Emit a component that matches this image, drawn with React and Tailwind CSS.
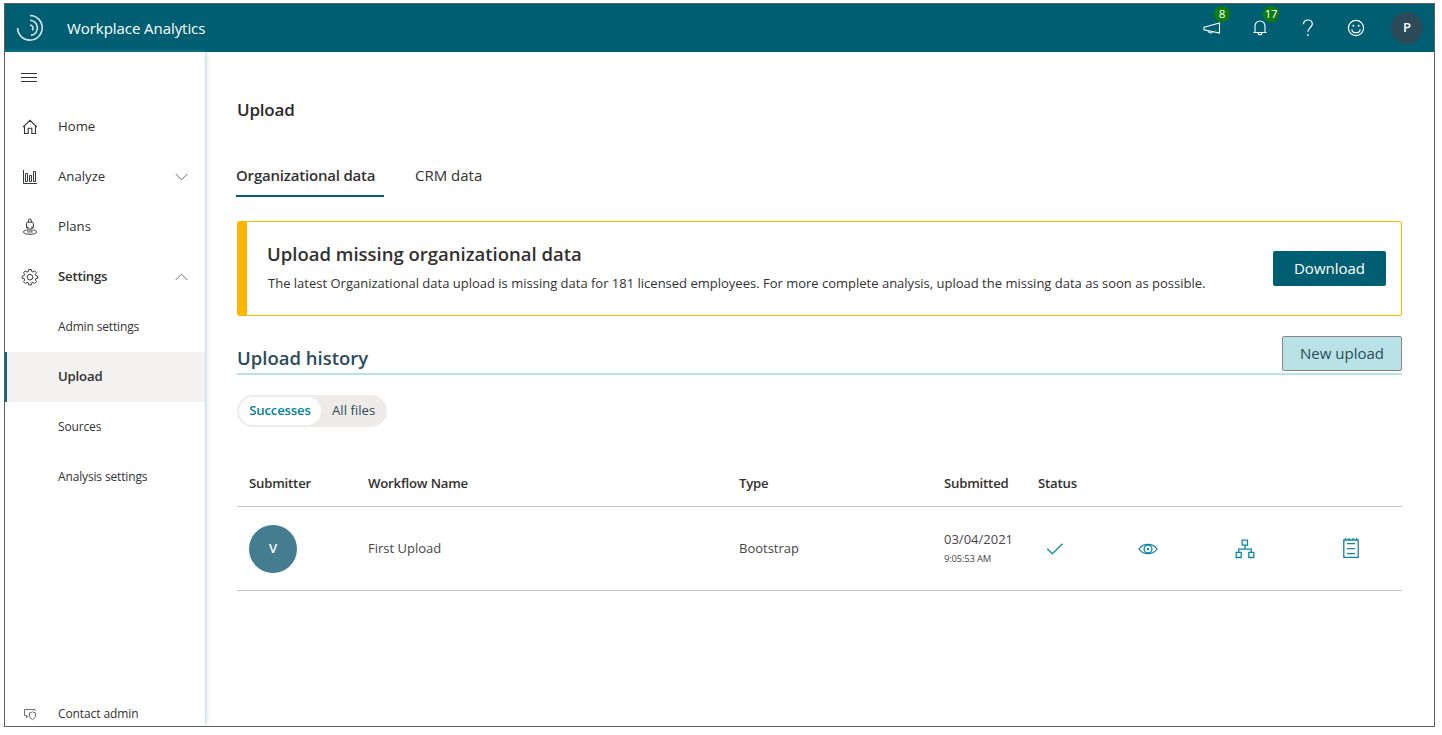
const NAV_TEXT = 'text-[#323130] whitespace-nowrap';

function Logo() {
  return (
    <svg className="h-7 w-7" viewBox="0 0 28 28" fill="none" stroke="#d3e6ea" strokeWidth="1.6">
      <path d="M14 1.5A12.3 12.3 0 1 1 1.6 14" />
      <path d="M14 6.3a7.6 7.6 0 0 1 1 15.1" />
      <path d="M14 11a3.2 3.2 0 0 1 2.2 5.4" />
    </svg>
  );
}

function Megaphone() {
  return (
    <svg className="h-[18px] w-[18px]" viewBox="0 0 18 18" fill="none" stroke="#fff" strokeWidth="1.1">
      <path d="M1 8.2 16.5 4v10L1 10.8z" />
      <path d="M5 11.8c.3 2.6 4 3 4.6.9" />
    </svg>
  );
}

function Bell() {
  return (
    <svg className="h-[18px] w-[18px]" viewBox="0 0 18 18" fill="none" stroke="#fff" strokeWidth="1.1">
      <path d="M2.5 13.5h13M4 13.5V7a5 5 0 0 1 10 0v6.5M7 13.8a2 2 0 0 0 4 0" />
    </svg>
  );
}

function Question() {
  return (
    <svg className="h-[18px] w-[12px]" viewBox="0 0 12 18" fill="none" stroke="#fff" strokeWidth="1.2">
      <path d="M1.5 5.2C1.5 2.6 3.300 1 5.800 1s4.500 1.500 4.500 4c0 3.600-4.500 3.800-4.500 7.700" />
      <path d="M5.800 15.300v1.600" strokeWidth="1.500" />
    </svg>
  );
}

function Smile() {
  return (
    <svg className="h-[18px] w-[18px]" viewBox="0 0 18 18" fill="none" stroke="#fff" strokeWidth="1.2">
      <circle cx="9" cy="9" r="7.600" />
      <path d="M4.700 10.300a4.400 4.400 0 0 0 8.600 0" />
      <circle cx="6.300" cy="6.800" r="1" fill="#fff" stroke="none" />
      <circle cx="11.700" cy="6.800" r="1" fill="#fff" stroke="none" />
    </svg>
  );
}

function HomeIcon() {
  return (
    <svg className="h-4 w-4" viewBox="0 0 16 16" fill="none" stroke="#3b3038" strokeWidth="1.1">
      <path d="M1 8.200 8 1.300l7 6.900M2.500 7v7.500h3.700V9.300h3.600v5.200h3.700V7" />
    </svg>
  );
}

function ChartIcon() {
  return (
    <svg className="h-4 w-4" viewBox="0 0 16 16" fill="none" stroke="#2f3b33" strokeWidth="1">
      <path d="M1.500 1v13.500H15" />
      <path d="M3.500 4.500h2v8h-2zM7.500 6.500h2v6h-2zM11.500 2.500h2v10h-2z" />
    </svg>
  );
}

function PlansIcon() {
  return (
    <svg className="h-[18px] w-4" viewBox="0 0 16 18" fill="none" stroke="#33302f" strokeWidth="1">
      <path d="M6.500 4V2.200a1 1 0 0 1 1-1h.8a1 1 0 0 1 1 1V4" />
      <path d="M4.500 5.500c0-1 .5-1.300 1.300-1.300H10c.8 0 1.400.3 1.400 1.300v4.200H9.900M4.500 5.500v4.200H6M6 8.500v6.200M8 10v4.700M9.900 8.500v6.200" />
      <path d="M4.700 12C2.700 12.300 1.500 13 1.500 14c0 1.400 2.900 2.300 6.500 2.300s6.500-.9 6.500-2.300c0-1-1.200-1.700-3.200-2" />
    </svg>
  );
}

function GearIcon() {
  return (
    <svg className="h-[18px] w-[18px]" viewBox="0 0 18 18" fill="none" stroke="#3d3b3a" strokeWidth="1">
      <path d="M7.700 1.500h2.600l.4 2 1.300.5 1.700-1.100 1.800 1.800L14.300 6.400l.5 1.300 2 .4v2.200l-2 .4-.5 1.300 1.200 1.700-1.800 1.800-1.700-1.100-1.300.5-.4 2H7.700l-.4-2-1.300-.5-1.700 1.100-1.800-1.800 1.200-1.700-.5-1.300-2-.4V8.100l2-.4.5-1.300-1.200-1.700 1.800-1.800L6 4l1.300-.5z" />
      <circle cx="9" cy="9.200" r="2.800" />
    </svg>
  );
}

function ContactIcon() {
  return (
    <svg className="h-[13px] w-[14px]" viewBox="0 0 14 13" fill="none" stroke="#6e6a70" strokeWidth="1">
      <path d="M12 3V1.500H1.500v6h2v2l2-1.700" />
      <path d="M6.500 4.800c1.200 0 2-.3 3-1 1 .7 1.800 1 3 1V7c0 2.300-1.300 3.700-3 4.700-1.700-1-3-2.400-3-4.700z" />
    </svg>
  );
}

function Chevron({ up, color }) {
  return (
    <svg className="h-2 w-[13px]" viewBox="0 0 13 8" fill="none" stroke={color} strokeWidth="1">
      <path d={up ? 'M.7 7 6.500 1.200 12.300 7' : 'M.7 1 6.500 6.800 12.300 1'} />
    </svg>
  );
}

function CheckIcon() {
  return (
    <svg className="h-3 w-[18px]" viewBox="0 0 18 12" fill="none" stroke="#1790ac" strokeWidth="1.400">
      <path d="M1.300 5.800 6.300 10.700 16.500.7" />
    </svg>
  );
}

function EyeIcon() {
  return (
    <svg className="h-3 w-5" viewBox="0 0 20 12" fill="none" stroke="#0d86a5" strokeWidth="1.300">
      <path d="M1 6C3 2.800 6 1.300 10 1.300S17 2.800 19 6c-2 3.200-5 4.700-9 4.700S3 9.200 1 6z" />
      <circle cx="10" cy="6" r="3.900" />
      <circle cx="10" cy="6" r="1.200" fill="#0d86a5" stroke="none" />
    </svg>
  );
}

function OrgIcon() {
  return (
    <svg className="h-5 w-5" viewBox="0 0 20 20" fill="none" stroke="#0d86a5" strokeWidth="1.300">
      <path d="M7.200 1.100h5.300v5H7.200zM1.200 13.400h5v5.100h-5zM13.800 13.400h5v5.100h-5zM10 6v4.200M3.700 13.400v-3.200h12.600v3.200" />
    </svg>
  );
}

function NotesIcon() {
  return (
    <svg className="h-[21px] w-4" viewBox="0 0 16 21" fill="none" stroke="#0d86a5" strokeWidth="1.300">
      <path d="M.8 2h14.400v17.400H.8z" />
      <path d="M2.500 0v2M6 0v2M10 0v2M13.500 0v2" />
      <path d="M4 5.600h8M4 10.600h8M4 15.600h8" strokeWidth="1.100" />
    </svg>
  );
}

function NavItem({ icon, label, bold, chevron }) {
  return (
    <div className="flex h-[50px] items-center pr-[17px]">
      <div className="flex w-[50px] shrink-0 justify-center">{icon}</div>
      <span
        className={`flex-1 pl-[3px] text-[13.200px] ${bold ? 'font-semibold tracking-[-0.220px]' : 'tracking-[0px]'} ${NAV_TEXT}`}
      >
        {label}
      </span>
      {chevron}
    </div>
  );
}

function SubItem({ label, active }) {
  return (
    <div
      className={`flex h-[50px] items-center border-l-2 pl-[51px] ${active ? 'border-[#006d85] bg-[#f3f2f1] text-[13.200px] font-semibold tracking-[-0.200px]' : 'border-transparent text-[12px] tracking-[-0.150px]'} ${NAV_TEXT}`}
    >
      {label}
    </div>
  );
}

function Header() {
  return (
    <header className="flex h-12 shrink-0 items-center bg-[#005e72] pr-[11px] pl-[11px] text-white">
      <Logo />
      <h1 className="ml-[23px] text-[15px] leading-5 tracking-[-0.060px] whitespace-nowrap">Workplace Analytics</h1>
      <div className="ml-auto flex items-center">
        <div className="relative mr-[30px]">
          <Megaphone />
          <span className="absolute -top-[13px] left-[11px] flex h-4 w-4 items-center justify-center rounded-full bg-[#107c10] text-[11.500px] leading-none">
            8
          </span>
        </div>
        <div className="relative mr-[33px]">
          <Bell />
          <span className="absolute -top-[13px] left-[12px] flex h-4 w-4 items-center justify-center rounded-full bg-[#107c10] text-[11.500px] leading-none tracking-[-0.300px]">
            17
          </span>
        </div>
        <div className="mr-[33px]">
          <Question />
        </div>
        <div className="mr-[26px]">
          <Smile />
        </div>
        <div className="flex h-8 w-8 items-center justify-center rounded-full bg-[#2d4a58] text-[13px] font-semibold">P</div>
      </div>
    </header>
  );
}

function Sidebar() {
  return (
    <nav className="relative flex w-[200px] shrink-0 flex-col bg-white shadow-[0_0_6px_rgba(0,0,0,0.12),0_-1px_4px_rgba(60,190,205,0.5)]">
      <div className="flex h-[50px] flex-col justify-center gap-[3px] pl-4">
        <div className="h-px w-4 bg-[#323130]" />
        <div className="h-px w-4 bg-[#323130]" />
        <div className="h-px w-4 bg-[#323130]" />
      </div>
      <NavItem icon={<HomeIcon />} label="Home" />
      <NavItem icon={<ChartIcon />} label="Analyze" chevron={<Chevron color="#7b5f78" />} />
      <NavItem icon={<PlansIcon />} label="Plans" />
      <NavItem icon={<GearIcon />} label="Settings" bold chevron={<Chevron up color="#6d7378" />} />
      <SubItem label="Admin settings" />
      <SubItem label="Upload" active />
      <SubItem label="Sources" />
      <SubItem label="Analysis settings" />
      <div className="mt-auto flex h-6 items-center">
        <div className="flex w-[50px] justify-center">
          <ContactIcon />
        </div>
        <span className="pl-[3px] text-[12px] tracking-[-0.100px] whitespace-nowrap text-[#323130]">Contact admin</span>
      </div>
    </nav>
  );
}

const COLS = 'grid grid-cols-[131px_371px_205px_94px_72px_76px_118px_94px] items-center';

function UploadTable() {
  return (
    <div className="mt-[34px]">
      <div className={`${COLS} h-[46px] border-b border-[#c6c6c6] text-[13.200px] font-semibold whitespace-nowrap text-[#323130]`}>
        <span className="pl-3 tracking-[-0.200px]">Submitter</span>
        <span className="tracking-[-0.200px]">Workflow Name</span>
        <span className="pl-0 tracking-[-0.200px]">Type</span>
        <span className="tracking-[-0.200px]">Submitted</span>
        <span className="tracking-[-0.200px]">Status</span>
      </div>
      <div className={`${COLS} h-[84px] border-b border-[#c6c6c6] text-[13px] whitespace-nowrap text-[#484644]`}>
        <div className="pl-3">
          <div className="flex h-12 w-12 items-center justify-center rounded-full bg-[#437d8f] text-[13px] font-semibold text-white">
            V
          </div>
        </div>
        <span>First Upload</span>
        <span>Bootstrap</span>
        <div>
          <div className="text-[13px] leading-5">03/04/2021</div>
          <div className="text-[9.500px] leading-5 tracking-[-0.200px]">9:05:53 AM</div>
        </div>
        <div className="pl-2">
          <CheckIcon />
        </div>
        <div className="flex justify-center">
          <EyeIcon />
        </div>
        <div className="flex justify-center">
          <OrgIcon />
        </div>
        <div className="flex justify-center">
          <NotesIcon />
        </div>
      </div>
    </div>
  );
}

function Main() {
  return (
    <main className="flex min-w-0 flex-1 flex-col pr-8 pl-8">
      <h2 className="mt-[46px] text-[17px] leading-6 font-semibold tracking-[-0.200px] text-[#2b2a29]">Upload</h2>
      <div className="-ml-px mt-[30px] flex h-[45px] gap-[31px] text-[15px] leading-6 whitespace-nowrap text-[#323130]">
        <div className="w-[148px] border-b-2 border-[#005e72] pt-[11px] font-semibold tracking-[-0.200px]">Organizational data</div>
        <div className="pt-[11px]">CRM data</div>
      </div>
      <section className="mt-6 flex h-[95px] shrink-0 items-center rounded-[3px] border border-l-10 border-[#ffb600] pr-[15px] pl-5 whitespace-nowrap">
        <div>
          <h3 className="text-[18.500px] leading-7 font-semibold text-[#323130]">Upload missing organizational data</h3>
          <p className="mt-px pl-px text-[13px] leading-7 text-[#323130]">
            The latest Organizational data upload is missing data for 181 licensed employees. For more complete analysis, upload the
            missing data as soon as possible.
          </p>
        </div>
        <button className="ml-auto h-[35px] w-[113px] rounded-[2px] bg-[#005e72] text-[15px] text-white">Download</button>
      </section>
      <div className="mt-5 flex h-[39px] shrink-0 items-start justify-between border-b-2 border-[#b9e2e7]">
        <h3 className="mt-2 text-[18.500px] leading-7 font-semibold text-[#2b4c58]">Upload history</h3>
        <button className="h-[35px] w-[120px] rounded-[2px] border border-[#8a8886] bg-[#b9e2e7] text-[15px] text-[#2b4c58]">
          New upload
        </button>
      </div>
      <div className="mt-5 flex h-8 w-[150px] shrink-0 items-center rounded-full bg-[#efebe8] p-0.5 text-[13.200px] whitespace-nowrap">
        <div className="flex h-7 w-[82px] items-center justify-center rounded-full bg-white font-semibold tracking-[-0.200px] text-[#00829b]">
          Successes
        </div>
        <div className="flex-1 pl-[11px] text-[#2b4c58]">All files</div>
      </div>
      <UploadTable />
    </main>
  );
}

export default function App() {
  return (
    <div className="h-[735px] w-[1442px] overflow-hidden bg-white pt-[3px] pl-1 font-['Open_Sans','Noto_Sans',sans-serif]">
      <div className="flex h-[724px] w-[1431px] flex-col overflow-hidden border border-[#5f5f5f]">
        <Header />
        <div className="flex min-h-0 flex-1">
          <Sidebar />
          <Main />
        </div>
      </div>
    </div>
  );
}
